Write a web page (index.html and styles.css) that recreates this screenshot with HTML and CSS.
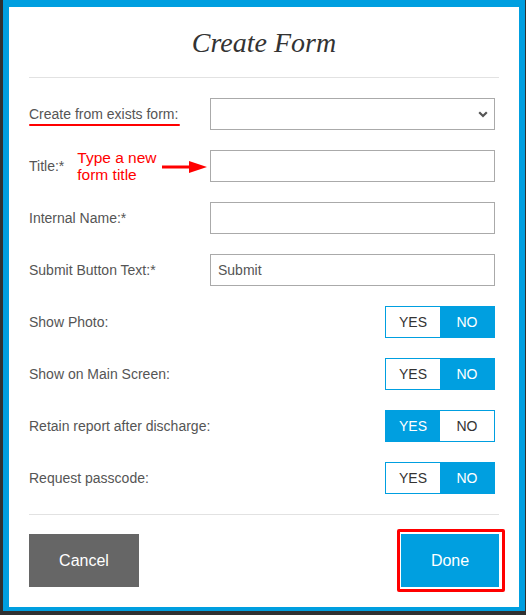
FILE: index.html
```html
<!DOCTYPE html>
<html lang="en">
<head>
<meta charset="utf-8">
<title>Create Form</title>
<link rel="stylesheet" href="styles.css">
</head>
<body>
<div class="modal">
  <h1 class="modal-title">Create Form</h1>
  <div class="form-grid">
    <div class="label"><span class="marked">Create from exists form:</span></div>
    <div class="select">
      <svg class="chev" width="10" height="7" viewBox="0 0 10 7"><polyline points="1.2,1.2 5,5 8.8,1.2" fill="none" stroke="#555" stroke-width="2.2"/></svg>
    </div>

    <div class="label">
      <span>Title:*</span>
      <span class="note">Type a new<br>form title</span>
      <svg class="arrow" width="45" height="14" viewBox="0 0 45 14"><rect x="0" y="5.5" width="30" height="3" fill="#f00"/><polygon points="27,1 45,7 27,13" fill="#f00"/></svg>
    </div>
    <div class="input"></div>

    <div class="label">Internal Name:*</div>
    <div class="input"></div>

    <div class="label">Submit Button Text:*</div>
    <div class="input">Submit</div>

    <div class="label">Show Photo:</div>
    <div class="toggle"><span>YES</span><span class="on">NO</span></div>

    <div class="label">Show on Main Screen:</div>
    <div class="toggle"><span>YES</span><span class="on">NO</span></div>

    <div class="label">Retain report after discharge:</div>
    <div class="toggle"><span class="on">YES</span><span>NO</span></div>

    <div class="label">Request passcode:</div>
    <div class="toggle"><span>YES</span><span class="on">NO</span></div>
  </div>
  <div class="footer">
    <div class="btn btn-cancel">Cancel</div>
    <div class="btn btn-done">Done</div>
  </div>
</div>
</body>
</html>
```

FILE: styles.css
```css
html, body {
  margin: 0;
  padding: 0;
}
body {
  background: #303030;
  width: 526px;
  height: 615px;
  overflow: hidden;
  font-family: "Liberation Sans", Arial, sans-serif;
}
.modal {
  box-sizing: border-box;
  margin-left: 3px;
  width: 522px;
  height: 611px;
  background: #fff;
  border-style: solid;
  border-color: #009fe0;
  border-width: 7px 6px 4px 6px;
  padding: 0 20px;
}
.modal-title {
  margin: 0;
  padding: 19px 0 17px;
  line-height: 34px;
  text-align: center;
  font-family: "Liberation Serif", "Times New Roman", serif;
  font-style: italic;
  font-weight: normal;
  font-size: 28px;
  color: #333;
  border-bottom: 1px solid #e2e2e2;
}
.form-grid {
  display: grid;
  grid-template-columns: 181px 285px;
  grid-auto-rows: 32px;
  row-gap: 20px;
  padding: 20px 0;
  border-bottom: 1px solid #e2e2e2;
}
.label {
  display: flex;
  align-items: center;
  font-size: 14px;
  color: #555;
  white-space: nowrap;
}
.marked {
  position: relative;
}
.marked::after {
  content: "";
  position: absolute;
  left: 0;
  right: -2px;
  bottom: -4px;
  height: 2px;
  border-radius: 1px;
  background: #f00;
}
.note {
  margin-left: 13px;
  font-size: 15.5px;
  line-height: 17px;
  color: #f00;
}
.arrow {
  margin-left: 5px;
  margin-top: 1px;
}
.select, .input {
  box-sizing: border-box;
  height: 32px;
  border: 1px solid #aaa;
  background: #fff;
  display: flex;
  align-items: center;
  font-size: 14px;
  color: #555;
}
.select {
  justify-content: flex-end;
  padding-right: 6px;
}
.input {
  padding: 0 7px;
}
.toggle {
  justify-self: end;
  box-sizing: border-box;
  width: 110px;
  height: 32px;
  border: 1px solid #009fe0;
  display: flex;
}
.toggle span {
  flex: 1;
  display: flex;
  align-items: center;
  justify-content: center;
  font-size: 14px;
  color: #333;
}
.toggle span.on {
  background: #009fe0;
  color: #fff;
}
.footer {
  display: flex;
  justify-content: space-between;
  padding-top: 19px;
}
.btn {
  height: 53px;
  display: flex;
  align-items: center;
  justify-content: center;
  color: #fff;
  font-size: 16px;
}
.btn-cancel {
  width: 110px;
  background: #666;
}
.btn-done {
  position: relative;
  width: 98px;
  background: #009fe0;
}
.btn-done::after {
  content: "";
  position: absolute;
  top: -5px;
  bottom: -5px;
  left: -4px;
  right: -6px;
  border: 3px solid #f00;
  border-radius: 2px;
}
```
